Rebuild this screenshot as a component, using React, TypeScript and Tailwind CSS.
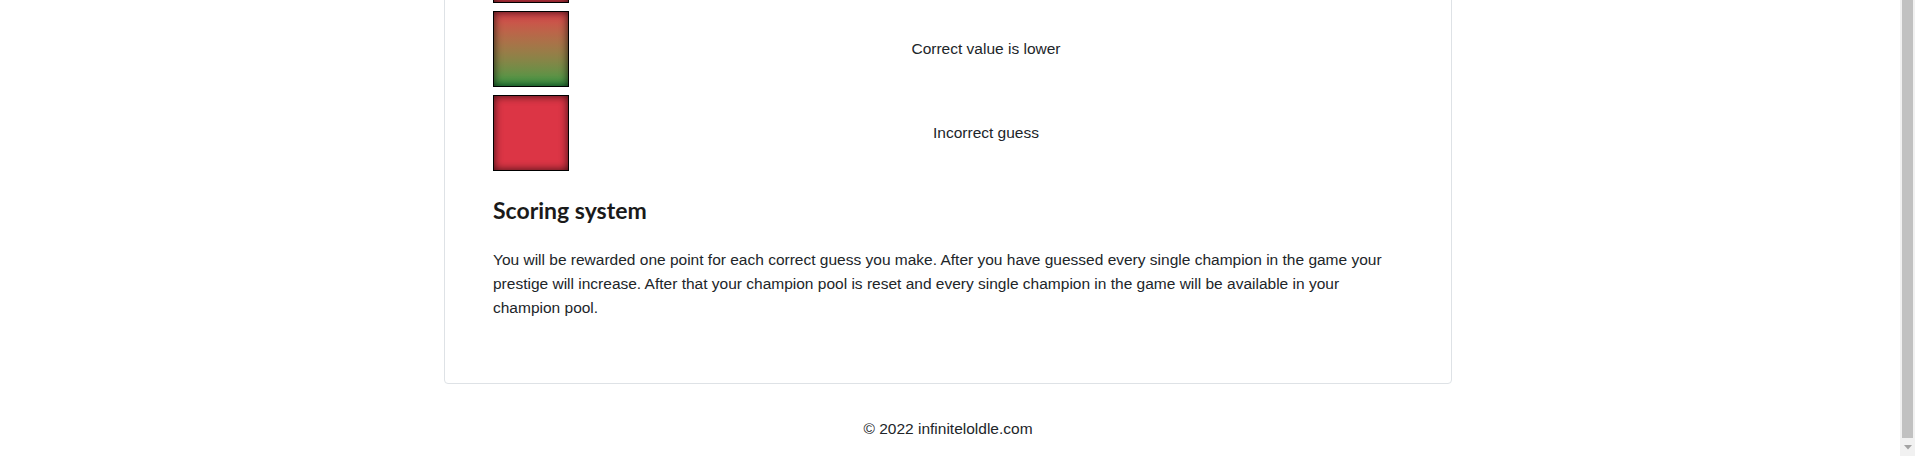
import React from 'react'

const rows = [
    { label: '', swatch: 'bg-gradient-to-b from-[#28a745] to-[#dc3545]' },
    { label: 'Correct value is lower', swatch: 'bg-gradient-to-b from-[#d9404a] to-[#2e9a45]' },
    { label: 'Incorrect guess', swatch: 'bg-[#dc3545]' },
]

const LegendRow = ({ label, swatch }: { label: string; swatch: string }) => {
    return (
        <div className="mb-2 flex flex-row items-center">
            <div
                className={`size-[76px] shrink-0 border border-black shadow-[inset_0_0_9px_rgba(0,0,0,0.75)] ${swatch}`}
            />
            <div className="flex-1 text-center">{label}</div>
        </div>
    )
}

const Scrollbar = () => {
    return (
        <div className="flex h-full w-[15px] shrink-0 flex-col bg-[#f1f1f1]">
            <div className="mx-[2px] flex-1 bg-[#c1c1c1]" />
            <div className="flex h-[18px] items-center justify-center">
                <svg width="8" height="5" viewBox="0 0 8 5">
                    <polygon points="0,0 8,0 4,4.5" fill="#a3a3a3" />
                </svg>
            </div>
        </div>
    )
}

export default function App() {
    return (
        <div className="flex h-[456px] w-full overflow-hidden bg-white text-[#212529] font-['Liberation_Sans',Arial,sans-serif] text-[15.5px] leading-6">
            <div className="flex min-h-0 min-w-0 flex-1 flex-col justify-end">
                <div className="ml-[444px] w-[1008px] shrink-0">
                    <div className="rounded border border-[#dee2e6] px-12 pt-12 pb-[47px]">
                        {rows.map((r, i) => (
                            <LegendRow key={i} label={r.label} swatch={r.swatch} />
                        ))}
                        <h2 className="mt-[25px] font-['Lato',sans-serif] text-[23px] font-bold leading-[29px] text-[#1a1a1a]">
                            Scoring system
                        </h2>
                        <p className="mt-[23px] mb-4">
                            You will be rewarded one point for each correct guess you make. After you have guessed every
                            single champion in the game your prestige will increase. After that your champion pool is
                            reset and every single champion in the game will be available in your champion pool.
                        </p>
                    </div>
                    <footer className="pt-[33px] pb-[15px] text-center">© 2022 infiniteloldle.com</footer>
                </div>
            </div>
            <Scrollbar />
        </div>
    )
}
